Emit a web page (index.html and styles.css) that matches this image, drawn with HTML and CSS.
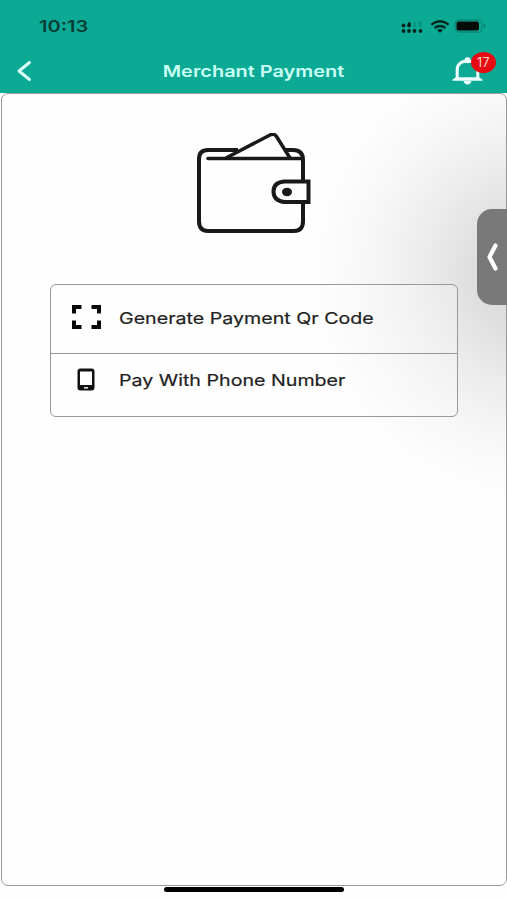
FILE: index.html
```html
<!DOCTYPE html>
<html lang="en">
<head>
<meta charset="utf-8">
<title>Merchant Payment</title>
<link rel="stylesheet" href="styles.css">
</head>
<body>
<div class="screen">
  <header class="header">
    <div class="status">
      <span class="time">10:13</span>
      <div class="indicators">
        <svg width="22" height="14" viewBox="0 0 22 14">
          <g fill="#06251f"><circle cx="2.5" cy="6.5" r="1.9"/><circle cx="8" cy="6.5" r="1.9"/><rect x="6.9" y="3.3" width="2.7" height="3"/><circle cx="2.5" cy="12" r="1.9"/><circle cx="8" cy="12" r="1.9"/><circle cx="13.5" cy="12" r="1.9"/><circle cx="19.5" cy="12" r="1.9"/></g>
          <g fill="#079581"><rect x="12.2" y="3" width="2.6" height="5.5"/><rect x="18" y="2" width="2.6" height="6.5"/></g>
        </svg>
        <svg class="wifi" width="20" height="13" viewBox="0 0 20 13" fill="none" stroke="#06251f" stroke-width="2.3">
          <path d="M1.3 4.6Q10-2 18.7 4.6M4.6 8Q10 4 15.4 8"/><path d="M7 10.2Q10 8 13 10.2L10 12.7Z" fill="#06251f" stroke="none"/>
        </svg>
        <svg class="battery" width="33" height="14" viewBox="0 0 33 14">
          <rect x="1" y="1" width="27" height="12" rx="4" fill="none" stroke="#078a78" stroke-width="1.3"/><rect x="2.5" y="2.5" width="22.5" height="9" rx="2" fill="#030b09"/><path d="M29.5 4.5Q34 7 29.5 9.5Z" fill="#078a78"/>
        </svg>
      </div>
    </div>
    <div class="nav">
      <svg class="back" width="16" height="22" viewBox="0 0 16 22"><path d="M13.5 2.5L3 11L13.5 19.5" fill="none" stroke="#dcfff8" stroke-width="2.9" stroke-linecap="round" stroke-linejoin="round"/></svg>
      <h1 class="title"><span>Merchant Payment</span></h1>
      <div class="bell">
        <svg width="32" height="28" viewBox="0 0 32 28">
          <path d="M5.2 21.5V13C5.2 7.5 9.2 4 15.5 4S25.8 7.5 25.8 13V21.5" fill="none" stroke="#efffff" stroke-width="3"/><circle cx="15.5" cy="3.3" r="3" fill="#efffff"/><path d="M.5 23.8V22.5L4 20.3H27L30.5 22.5V23.8Z" fill="#efffff"/><path d="M11.5 24H19.5Q18.5 27.5 15.5 27.5T11.5 24Z" fill="#efffff"/>
        </svg>
        <span class="badge">17</span>
      </div>
    </div>
  </header>
  <main class="panel">
    <svg class="wallet" width="118" height="104" viewBox="0 0 118 104" fill="none" stroke="#191919" stroke-width="4">
      <path d="M43 17H13Q4 17 4 26V88Q4 98 13 98H99Q108 98 108 88V69M108 48V27Q108 17 98 17H91"/>
      <path d="M13 25.5H106" stroke-width="3.5" stroke-linecap="round"/>
      <path d="M31 25L75 2Q79 0 81.5 3.5L95 25" stroke-width="3.5"/>
      <path d="M113.5 48.5H89Q78.500 49.500 78.500 58.500T89 69H113.500Z"/>
      <ellipse cx="92" cy="59" rx="5" ry="4.200" fill="#191919" stroke="none"/>
    </svg>
    <div class="options">
      <div class="option">
        <svg class="option-icon" width="30" height="26" viewBox="0 0 30 26" fill="none" stroke="#080808" stroke-width="4"><path d="M2 8.500V2H9.500M19.500 2H27V8.500M27 15.500V22H19.500M9.500 22H2V15.500"/></svg>
        <span class="label label-qr">Generate Payment Qr Code</span>
      </div>
      <div class="option option-phone">
        <svg class="option-icon" width="30" height="24" viewBox="0 0 30 24"><rect x="5.500" y=".5" width="17" height="22" rx="3" fill="#111"/><rect x="8" y="3.500" width="12" height="13.500" fill="#fff"/><rect x="12" y="19" width="4" height="1.600" fill="#ddd"/></svg>
        <span class="label label-phone">Pay With Phone Number</span>
      </div>
    </div>
  </main>
  <div class="home-bar"></div>
  <div class="drawer"><svg width="14" height="30" viewBox="0 0 14 30"><path d="M10.500 3.500L4.500 15L10.500 26.500" fill="none" stroke="#fff" stroke-width="4.200" stroke-linejoin="round" stroke-linecap="round"/></svg></div>
</div>
</body>
</html>
```
FILE: styles.css
```css
* { box-sizing: border-box; }
body { margin: 0; font-family: Inter, "Liberation Sans", sans-serif; }
svg { display: block; }
.screen { position: relative; width: 507px; height: 900px; overflow: hidden; background: #fefefe; display: flex; flex-direction: column; }
.header { height: 93px; flex: none; background: #0caa95; }
.status { height: 50px; padding: 2px 20px 0 39px; display: flex; justify-content: space-between; align-items: center; }
.time { font-size: 16px; font-weight: 600; color: #063d35; transform: scaleX(1.25); transform-origin: left; }
.indicators { display: flex; align-items: center; }
.wifi { margin-left: 7px; }
.battery { margin-left: 4px; }
.nav { height: 43px; padding: 0 10px 1px 16px; display: grid; grid-template-columns: 45px 1fr 45px; align-items: center; }
.title { margin: 0 0 0 -6px; font-size: 16px; line-height: 20px; font-weight: 600; color: #c9fff4; text-align: center; }
.title span { display: block; transform: scaleX(1.245); }
.bell { position: relative; width: 45px; height: 28px; }
.badge { position: absolute; left: 19px; top: -5px; width: 25px; height: 21px; border-radius: 50%; background: #e60b12; color: #ffd8d0; font-size: 12.5px; line-height: 21px; text-align: center; letter-spacing: 0.5px; }
.panel { flex: none; height: 793px; margin-left: 1px; border: 1px solid #9a9a9a; border-radius: 7px; display: flex; flex-direction: column; align-items: center; padding-top: 39px; background: radial-gradient(ellipse 220px 225px at 530px 180px, #d6d6d6 0%, #dedede 25%, #ececec 50%, #f7f7f7 75%, #fefefe 100%), #fefefe; }
.wallet { margin-right: 1px; }
.options { width: 408px; height: 133px; margin-top: 47px; border: 1px solid #999; border-radius: 6px; background: rgba(255, 255, 255, 0.2); }
.option { height: 69px; padding-left: 21px; display: flex; align-items: center; }
.option-icon { flex: none; margin-right: 17px; }
.option:first-child { border-bottom: 1px solid #999; padding-bottom: 2px; }
.option-phone { height: 62px; padding-bottom: 10px; }
.label { font-size: 16.5px; color: #222; white-space: nowrap; transform-origin: left; transform: scaleX(1.19); -webkit-text-stroke: 0.2px #222; }
.home-bar { position: absolute; left: 164px; top: 887px; width: 180px; height: 5px; border-radius: 3px; background: #000; }
.drawer { position: absolute; left: 477px; top: 209px; width: 45px; height: 96px; border-radius: 15px; background: #797979; display: flex; align-items: center; padding-left: 8px; }
```
